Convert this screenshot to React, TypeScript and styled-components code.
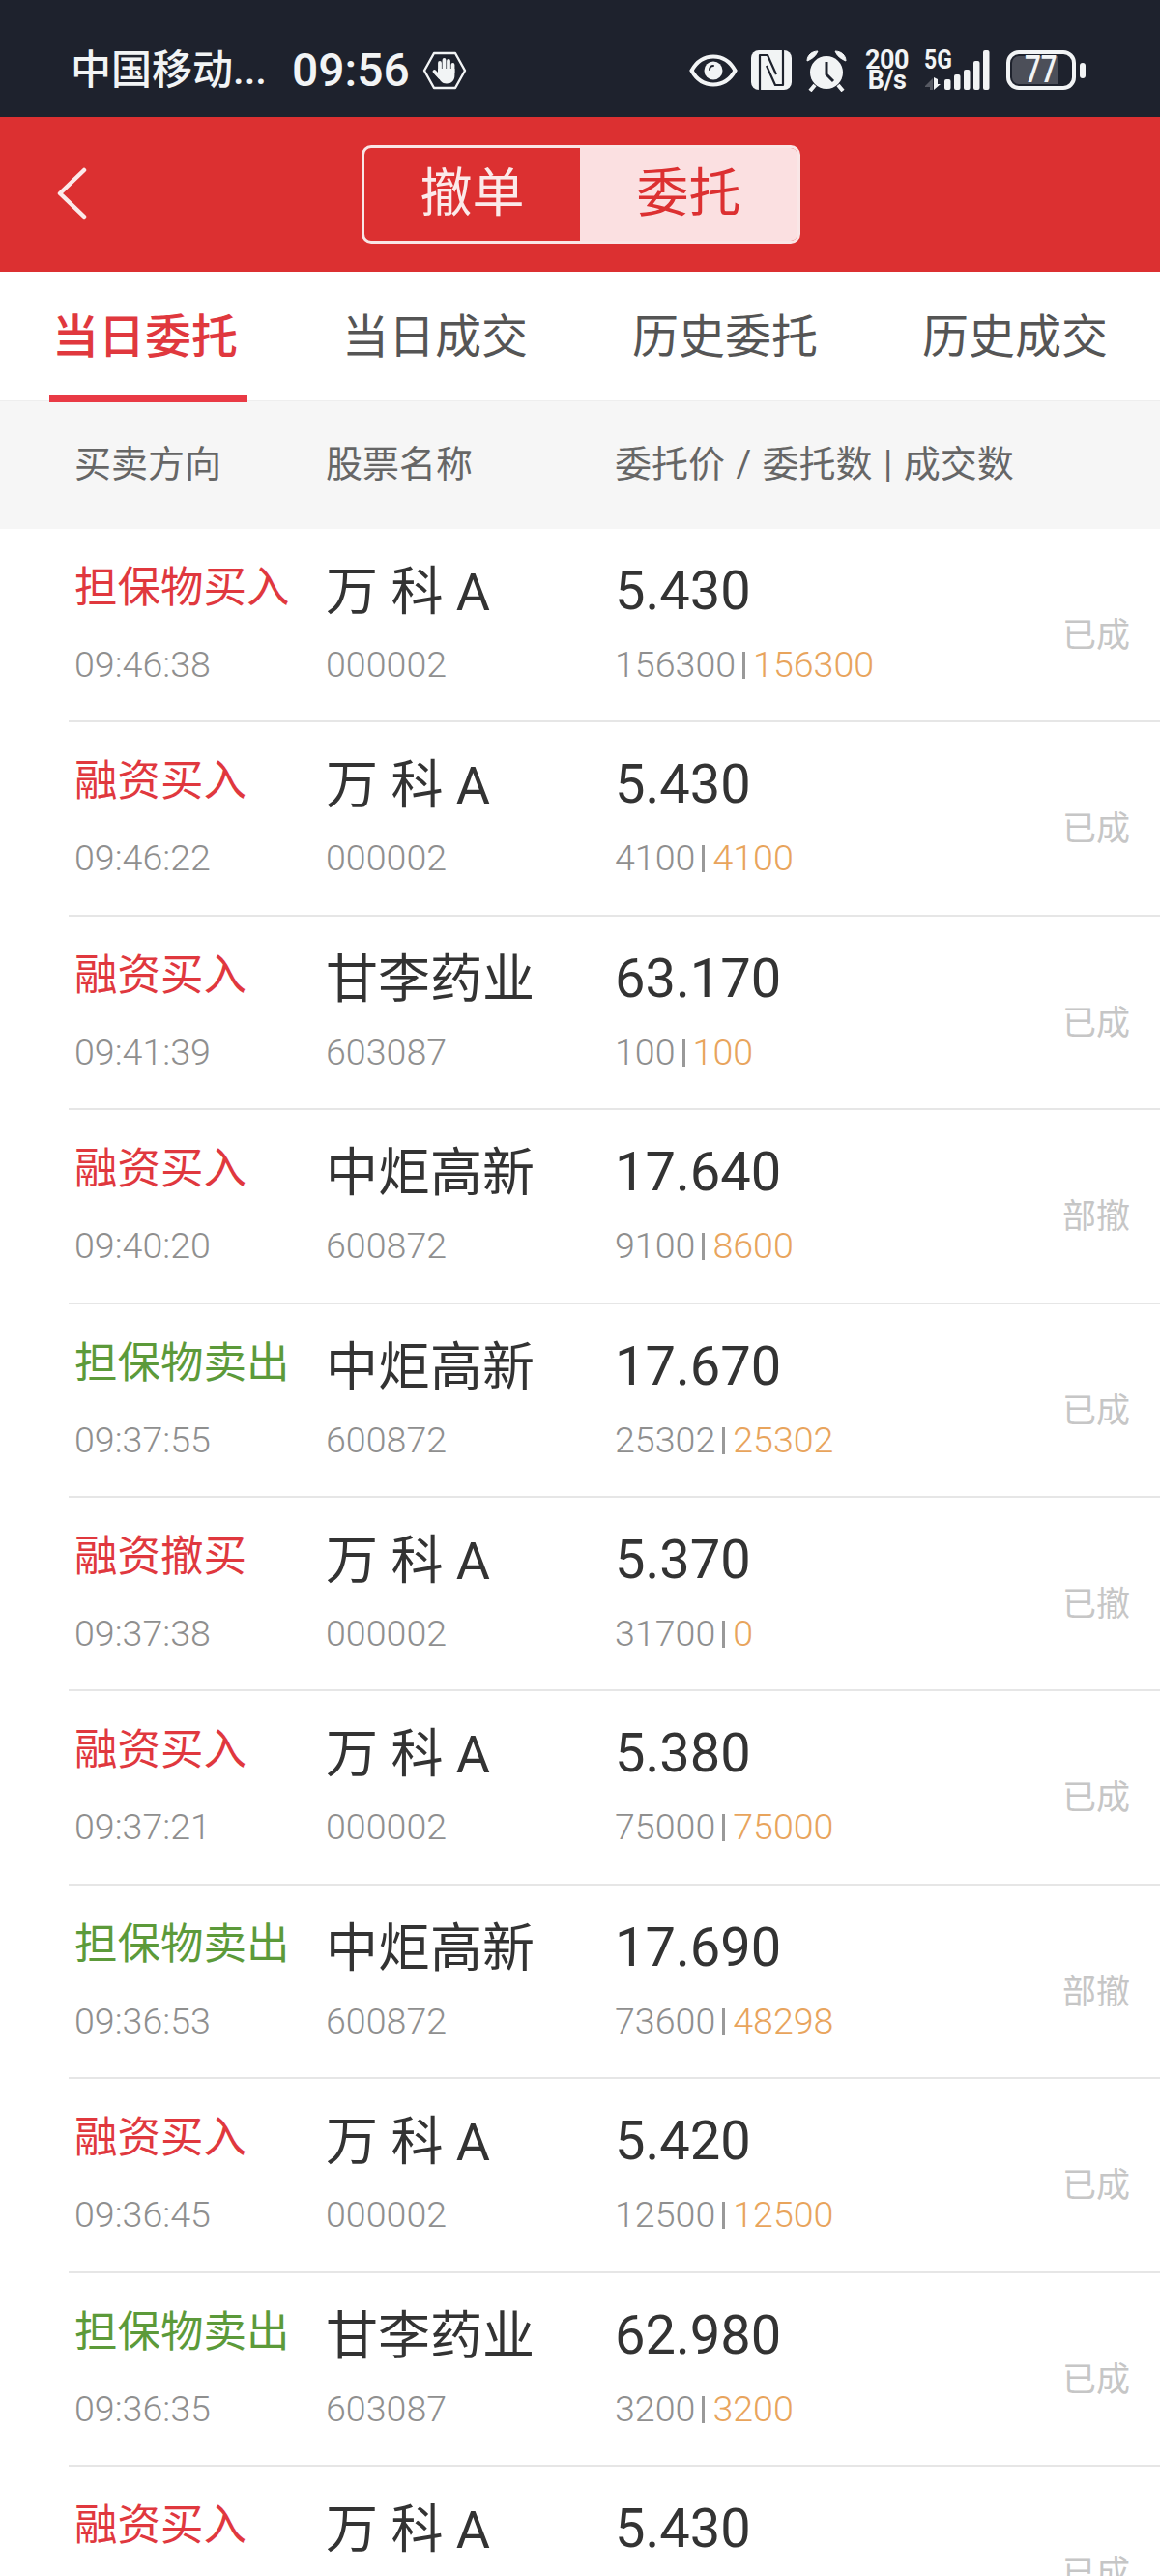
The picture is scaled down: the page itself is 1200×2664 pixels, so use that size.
/**
 * App.tsx
 * Margin trading order list page
 */

import { FC } from "react";
import styled, { createGlobalStyle } from "styled-components";

const BUY = "#e0383e";
const SELL = "#5c9a3a";
const ICON = "#f2f4f5";
const DARK = "#1e222d";
const FONT = `Roboto, "Noto Sans CJK SC", sans-serif`;

// Data
type Order = {
  side: string;
  sell?: boolean;
  time: string;
  name: string;
  code: string;
  price: string;
  qty: string;
  done: string;
  status: string;
};

const orders: Order[] = [
  { side: "担保物买入", time: "09:46:38", name: "万 科 A", code: "000002", price: "5.430", qty: "156300", done: "156300", status: "已成" },
  { side: "融资买入", time: "09:46:22", name: "万 科 A", code: "000002", price: "5.430", qty: "4100", done: "4100", status: "已成" },
  { side: "融资买入", time: "09:41:39", name: "甘李药业", code: "603087", price: "63.170", qty: "100", done: "100", status: "已成" },
  { side: "融资买入", time: "09:40:20", name: "中炬高新", code: "600872", price: "17.640", qty: "9100", done: "8600", status: "部撤" },
  { side: "担保物卖出", sell: true, time: "09:37:55", name: "中炬高新", code: "600872", price: "17.670", qty: "25302", done: "25302", status: "已成" },
  { side: "融资撤买", time: "09:37:38", name: "万 科 A", code: "000002", price: "5.370", qty: "31700", done: "0", status: "已撤" },
  { side: "融资买入", time: "09:37:21", name: "万 科 A", code: "000002", price: "5.380", qty: "75000", done: "75000", status: "已成" },
  { side: "担保物卖出", sell: true, time: "09:36:53", name: "中炬高新", code: "600872", price: "17.690", qty: "73600", done: "48298", status: "部撤" },
  { side: "融资买入", time: "09:36:45", name: "万 科 A", code: "000002", price: "5.420", qty: "12500", done: "12500", status: "已成" },
  { side: "担保物卖出", sell: true, time: "09:36:35", name: "甘李药业", code: "603087", price: "62.980", qty: "3200", done: "3200", status: "已成" },
  { side: "融资买入", time: "", name: "万 科 A", code: "", price: "5.430", qty: "", done: "", status: "已成" },
];

const tabs = ["当日委托", "当日成交", "历史委托", "历史成交"];

// Styled Components
const GlobalStyle = createGlobalStyle`
  html, body {
    margin: 0;
    padding: 0;
    background: #fff;
  }
  * {
    box-sizing: border-box;
  }
`;

const Page = styled.div`
  width: 1200px;
  height: 2664px;
  overflow: hidden;
  background: #fff;
  font-family: ${FONT};
`;

const StatusBar = styled.div`
  height: 121px;
  padding: 24px 77px 0 73px;
  background: ${DARK};
  color: ${ICON};
  display: flex;
  align-items: center;
  justify-content: space-between;
`;

const StatusGroup = styled.div`
  display: flex;
  align-items: center;
`;

const Carrier = styled.span`
  font-size: 42px;
  font-weight: 500;
  line-height: 48px;
  width: 229px;
  white-space: nowrap;
`;

const Clock = styled.span`
  font-size: 48px;
  font-weight: 500;
  line-height: 48px;
  width: 135px;
`;

const IconSlot = styled.div<{ $gap: number }>`
  display: flex;
  margin-left: ${({ $gap }) => $gap}px;
`;

const Speed = styled.div`
  width: 45px;
  margin: 0 16px 0 19px;
  display: flex;
  flex-direction: column;
  align-items: center;
  font-size: 27px;
  font-weight: 700;
  line-height: 21px;
  letter-spacing: -0.5px;
`;

const FiveG = styled.span`
  position: absolute;
  left: 0;
  top: -2px;
  font-size: 27px;
  font-weight: 700;
  line-height: 24px;
  transform: scaleX(0.85);
  transform-origin: left;
`;

const Signal = styled.div`
  position: relative;
  width: 68px;
  height: 41px;
`;

const Battery = styled.div`
  position: relative;
  width: 72px;
  height: 41px;
  margin-left: 17px;
  border: 4px solid ${ICON};
  border-radius: 13px;
  padding: 2px;
`;

const BatteryFill = styled.div`
  height: 100%;
  background: #4c4f59;
  border-radius: 7px 0 0 7px;
`;

const BatteryLevel = styled.span`
  position: absolute;
  left: 15px;
  top: -3px;
  font-size: 38px;
  font-weight: 500;
  line-height: 38px;
  transform: scaleX(0.78);
  transform-origin: left;
`;

const BatteryNub = styled.div`
  width: 6px;
  height: 16px;
  margin-left: 4px;
  border-radius: 3px;
  background: ${ICON};
`;

const Header = styled.div`
  height: 160px;
  background: #dc3031;
  position: relative;
  display: flex;
  align-items: center;
  justify-content: center;
`;

const BackIcon = styled.svg`
  position: absolute;
  left: 59px;
  top: 52px;
`;

const Segment = styled.div`
  width: 454px;
  height: 102px;
  margin-left: 2px;
  display: grid;
  grid-template-columns: 223px 1fr;
  border: 3px solid #f9e6e6;
  border-radius: 10px;
  overflow: hidden;
`;

const SegmentItem = styled.div<{ $active?: boolean }>`
  display: flex;
  align-items: center;
  justify-content: center;
  font-size: 54px;
  line-height: 60px;
  color: ${({ $active }) => ($active ? "#dc3031" : "#fbeaea")};
  background: ${({ $active }) => ($active ? "#fbe0e1" : "transparent")};
`;

const Tabs = styled.div`
  height: 134px;
  display: grid;
  grid-template-columns: repeat(4, 300px);
  border-bottom: 1px solid #eeeeee;
`;

const Tab = styled.div<{ $active?: boolean }>`
  position: relative;
  display: flex;
  justify-content: center;
  padding-top: 38px;
  font-size: 48px;
  line-height: 60px;
  font-weight: ${({ $active }) => ($active ? 500 : 400)};
  color: ${({ $active }) => ($active ? BUY : "#555")};
`;

const TabLine = styled.div`
  position: absolute;
  left: 51px;
  bottom: -2px;
  width: 205px;
  height: 7px;
  background: #e93a45;
`;

const ColumnHead = styled.div`
  height: 132px;
  padding: 0 0 2px 77px;
  background: #f6f6f6;
  display: grid;
  grid-template-columns: 260px 299px 1fr;
  align-items: center;
  font-size: 38px;
  line-height: 48px;
  color: #666;
  word-spacing: 2px;
`;

const List = styled.div``;

const Row = styled.div`
  height: 200.4px;
  margin-left: 71px;
  padding: 33px 31px 0 6px;
  border-bottom: 2px solid #e6e6e6;
  display: grid;
  grid-template-columns: 260px 299px 1fr auto;
`;

const Cell = styled.div`
  display: flex;
  flex-direction: column;
  min-width: 0;
`;

const Side = styled.div<{ $sell?: boolean }>`
  height: 60px;
  font-size: 44.5px;
  line-height: 56px;
  white-space: nowrap;
  color: ${({ $sell }) => ($sell ? SELL : BUY)};
`;

const Name = styled.div`
  height: 60px;
  font-size: 54px;
  line-height: 66px;
  color: #333;
  white-space: nowrap;
`;

const Price = styled.div`
  height: 60px;
  font-size: 56px;
  line-height: 62px;
  color: #333;
`;

const Sub = styled.div`
  margin-top: 22px;
  font-size: 37.6px;
  font-weight: 300;
  line-height: 50px;
  color: #8f8f8f;
  white-space: nowrap;
`;

const Bar = styled.span`
  display: inline-block;
  width: 3px;
  height: 28px;
  margin: 0 8px 0 7px;
  background: #999;
  vertical-align: -2px;
`;

const Done = styled.span`
  color: #e8a45c;
`;

const Status = styled.div`
  align-self: flex-start;
  margin-top: 56px;
  font-size: 35px;
  line-height: 44px;
  color: #c6c6c6;
`;

// Icons
const HandIcon: FC = () => (
  <svg width="46" height="40" viewBox="0 0 46 40">
    <path d="M12 2 H34 L44 20 L34 38 H12 L2 20 Z" fill="none" stroke={ICON} strokeWidth="2.4" strokeLinejoin="round" />
    <path d="M18 20 V12 M22.5 20 V9 M27 20 V10 M31.5 22 V14 M12.5 21 L18 27" fill="none" stroke={ICON} strokeWidth="3.8" strokeLinecap="round" />
    <path d="M16 18 H33.4 V25 C33.4 30 30 33.5 25 33.5 C20 33.5 18 30 16 26 Z" fill={ICON} />
  </svg>
);

const EyeIcon: FC = () => (
  <svg width="50" height="36" viewBox="0 0 50 36">
    <path d="M2.5 18 C8 8 16 3.5 25 3.5 C34 3.5 42 8 47.5 18 C42 28 34 32.5 25 32.5 C16 32.5 8 28 2.5 18 Z" fill="none" stroke={ICON} strokeWidth="4" />
    <circle cx="25" cy="18" r="9.5" fill={ICON} />
    <path d="M21 17 C21 14.5 23 13 25 13" fill="none" stroke={DARK} strokeWidth="2" strokeLinecap="round" />
  </svg>
);

const NfcIcon: FC = () => (
  <svg width="42" height="41" viewBox="0 0 42 41">
    <rect width="42" height="41" rx="8" fill={ICON} />
    <path d="M9 41 V5 H17 L26 25" fill="none" stroke={DARK} strokeWidth="2.2" strokeLinejoin="round" />
    <path d="M33 0 V36 H25 L16 16" fill="none" stroke={DARK} strokeWidth="2.2" strokeLinejoin="round" />
  </svg>
);

const AlarmIcon: FC = () => (
  <svg width="42" height="44" viewBox="0 0 42 44">
    <circle cx="21" cy="24" r="17" fill={ICON} />
    <path d="M1 12 C1 6 6 2 12 2 C10 7 6 10 1 12 Z M41 12 C41 6 36 2 30 2 C32 7 36 10 41 12 Z" fill={ICON} stroke={ICON} strokeWidth="1" strokeLinejoin="round" />
    <path d="M9 37 L4 43 M33 37 L38 43" stroke={ICON} strokeWidth="4" />
    <path d="M21 13 V26 L28 33" fill="none" stroke={DARK} strokeWidth="3" />
  </svg>
);

const SignalIcon: FC = () => (
  <svg width="68" height="41" viewBox="0 0 68 41">
    <path d="M9 29 L1 37 V38 H6 V41 H9 Z" fill="#565962" />
    <path d="M10 28 V41 L17 35 H14 V30 Z" fill={ICON} />
    <rect x="21" y="30" width="6.5" height="11" rx="2" fill={ICON} />
    <rect x="31" y="25" width="6.5" height="16" rx="2" fill={ICON} />
    <rect x="41" y="20" width="6.5" height="21" rx="2" fill={ICON} />
    <rect x="51" y="11" width="6.5" height="30" rx="2" fill={ICON} />
    <rect x="61" y="0" width="6.5" height="41" rx="2" fill={ICON} />
  </svg>
);

const App: FC = () => {
  return (
    <Page>
      <GlobalStyle />
      <StatusBar>
        <StatusGroup>
          <Carrier>中国移动...</Carrier>
          <Clock>09:56</Clock>
          <HandIcon />
        </StatusGroup>
        <StatusGroup>
          <EyeIcon />
          <IconSlot $gap={14}>
            <NfcIcon />
          </IconSlot>
          <IconSlot $gap={15}>
            <AlarmIcon />
          </IconSlot>
          <Speed>
            <span>200</span>
            <span>B/s</span>
          </Speed>
          <Signal>
            <FiveG>5G</FiveG>
            <SignalIcon />
          </Signal>
          <Battery>
            <BatteryFill style={{ width: "80%" }} />
            <BatteryLevel>77</BatteryLevel>
          </Battery>
          <BatteryNub />
        </StatusGroup>
      </StatusBar>

      <Header>
        <BackIcon width="32" height="54" viewBox="0 0 32 54">
          <path d="M28 3 L3 27 L28 51" fill="none" stroke="#fbeaea" strokeWidth="4.5" strokeLinecap="round" strokeLinejoin="round" />
        </BackIcon>
        <Segment>
          <SegmentItem>撤单</SegmentItem>
          <SegmentItem $active>委托</SegmentItem>
        </Segment>
      </Header>

      <Tabs>
        {tabs.map((tab, i) => (
          <Tab key={tab} $active={i === 0}>
            {tab}
            {i === 0 && <TabLine />}
          </Tab>
        ))}
      </Tabs>

      <ColumnHead>
        <span>买卖方向</span>
        <span>股票名称</span>
        <span>委托价 / 委托数 | 成交数</span>
      </ColumnHead>

      <List>
        {orders.map((order, i) => (
          <Row key={i}>
            <Cell>
              <Side $sell={order.sell}>{order.side}</Side>
              <Sub>{order.time}</Sub>
            </Cell>
            <Cell>
              <Name>{order.name}</Name>
              <Sub>{order.code}</Sub>
            </Cell>
            <Cell>
              <Price>{order.price}</Price>
              <Sub>
                {order.qty}
                {order.qty && <Bar />}
                <Done>{order.done}</Done>
              </Sub>
            </Cell>
            <Status>{order.status}</Status>
          </Row>
        ))}
      </List>
    </Page>
  );
};

export default App;
